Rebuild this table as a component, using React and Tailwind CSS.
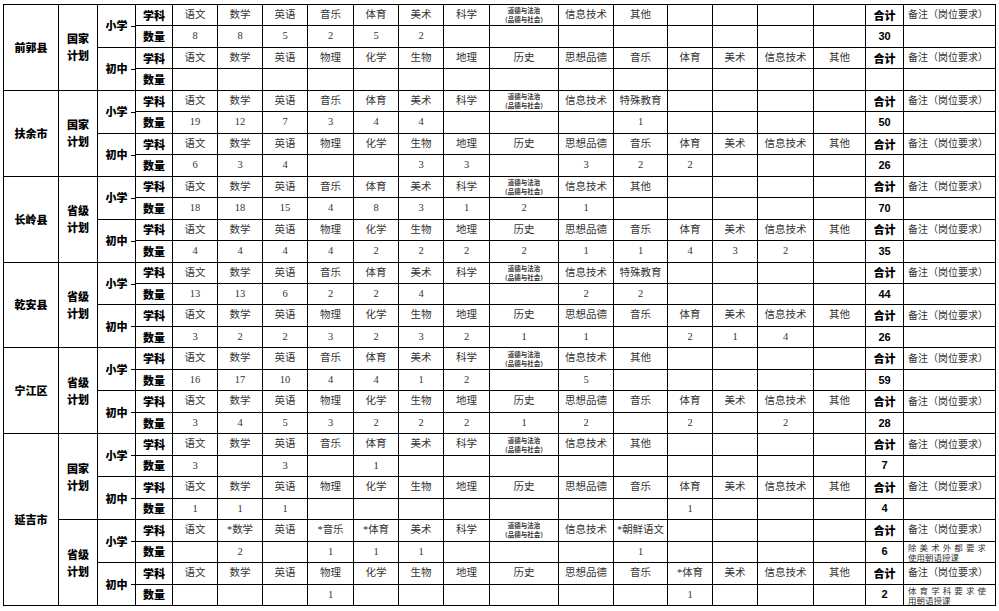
import React from "react";

const P = (x) => ["语文", "数学", "英语", "音乐", "体育", "美术", "科学", "DAO", "信息技术", x, "", "", "", ""];
const M = ["语文", "数学", "英语", "物理", "化学", "生物", "地理", "历史", "思想品德", "音乐", "体育", "美术", "信息技术", "其他"];
const E = ["", "", "", "", "", "", "", "", "", "", "", "", "", ""];
const n = (arr) => [...arr, ...E].slice(0, 14);

const blocks = [
  {
    county: "前郭县",
    plans: [
      {
        plan: ["国家", "计划"],
        levels: [
          { lvl: "小学", subj: P("其他"), nums: n([8, 8, 5, 2, 5, 2]), total: "30" },
          { lvl: "初中", subj: M, nums: n([]), total: "" },
        ],
      },
    ],
  },
  {
    county: "扶余市",
    plans: [
      {
        plan: ["国家", "计划"],
        levels: [
          { lvl: "小学", subj: P("特殊教育"), nums: n([19, 12, 7, 3, 4, 4, "", "", "", 1]), total: "50" },
          { lvl: "初中", subj: M, nums: n([6, 3, 4, "", "", 3, 3, "", 3, 2, 2]), total: "26" },
        ],
      },
    ],
  },
  {
    county: "长岭县",
    plans: [
      {
        plan: ["省级", "计划"],
        levels: [
          { lvl: "小学", subj: P("其他"), nums: n([18, 18, 15, 4, 8, 3, 1, 2, 1]), total: "70" },
          { lvl: "初中", subj: M, nums: n([4, 4, 4, 4, 2, 2, 2, 2, 1, 1, 4, 3, 2]), total: "35" },
        ],
      },
    ],
  },
  {
    county: "乾安县",
    plans: [
      {
        plan: ["省级", "计划"],
        levels: [
          { lvl: "小学", subj: P("特殊教育"), nums: n([13, 13, 6, 2, 2, 4, "", "", 2, 2]), total: "44" },
          { lvl: "初中", subj: M, nums: n([3, 2, 2, 3, 2, 3, 2, 1, 1, "", 2, 1, 4]), total: "26" },
        ],
      },
    ],
  },
  {
    county: "宁江区",
    plans: [
      {
        plan: ["省级", "计划"],
        levels: [
          { lvl: "小学", subj: P("其他"), nums: n([16, 17, 10, 4, 4, 1, 2, "", 5]), total: "59" },
          { lvl: "初中", subj: M, nums: n([3, 4, 5, 3, 2, 2, 2, 1, 2, "", 2, "", 2]), total: "28" },
        ],
      },
    ],
  },
  {
    county: "延吉市",
    plans: [
      {
        plan: ["国家", "计划"],
        levels: [
          { lvl: "小学", subj: P("其他"), nums: n([3, "", 3, "", 1]), total: "7" },
          { lvl: "初中", subj: M, nums: n([1, 1, 1, "", "", "", "", "", "", "", 1]), total: "4" },
        ],
      },
      {
        plan: ["省级", "计划"],
        levels: [
          {
            lvl: "小学",
            subj: ["语文", "*数学", "英语", "*音乐", "*体育", "美术", "科学", "DAO", "信息技术", "*朝鲜语文", "", "", "", ""],
            nums: n(["", 2, "", 1, 1, 1, "", "", "", 1]),
            total: "6",
            note: ["除美术外都要求", "使用朝语授课"],
          },
          {
            lvl: "初中",
            subj: ["语文", "数学", "英语", "物理", "化学", "生物", "地理", "历史", "思想品德", "音乐", "*体育", "美术", "信息技术", "其他"],
            nums: n(["", "", "", 1, "", "", "", "", "", "", 1]),
            total: "2",
            note: ["体育学科要求使", "用朝语授课"],
          },
        ],
      },
    ],
  },
];

const cell = "bg-white flex items-center justify-center overflow-hidden";
const label = "font-['Noto_Sans_CJK_SC',sans-serif] font-black text-[11px] text-black leading-none";
const data = "font-['Liberation_Serif','Noto_Sans_CJK_SC',serif] text-[10.5px] text-[#333] leading-none";
const totalCls = "font-['Liberation_Sans','Noto_Sans_CJK_SC',sans-serif] font-bold text-[11px] text-black leading-none";

function Subject({ s }) {
  if (s === "DAO") {
    return (
      <div className={`${cell} flex-col font-['Noto_Sans_CJK_SC',sans-serif] font-bold text-[6.5px] leading-[9px] text-[#333]`}>
        <span className="block h-[9px]">道德与法治</span>
        <span className="block h-[9px]">（品德与社会）</span>
      </div>
    );
  }
  return (
    <div className={`${cell} ${data} ${s.length >= 5 ? "text-[9.5px]" : ""}`}>{s}</div>
  );
}

function Level({ lv }) {
  const items = [];
  items.push(
    <div key="lvl" className={`${cell} ${label} row-span-2 relative`}>
      {lv.lvl}
      <span className="absolute right-0 top-1/2 h-px w-[4px] bg-black" />
    </div>
  );
  items.push(<div key="l1" className={`${cell} ${label}`}>学科</div>);
  lv.subj.forEach((s, i) => items.push(<Subject key={"s" + i} s={s} />));
  items.push(<div key="t1" className={`${cell} ${label}`}>合计</div>);
  items.push(
    <div key="r1" className={`bg-white flex items-center pl-[4px] ${data} text-[10px] whitespace-nowrap`}>
      备注（岗位要求）
    </div>
  );
  items.push(<div key="l2" className={`${cell} ${label}`}>数量</div>);
  lv.nums.forEach((v, i) =>
    items.push(
      <div key={"n" + i} className={`${cell} ${data}`}>
        {v}
      </div>
    )
  );
  items.push(<div key="t2" className={`${cell} ${totalCls}`}>{lv.total}</div>);
  items.push(
    <div key="r2" className="bg-white flex flex-col justify-center pl-[4px] overflow-hidden font-['Noto_Sans_CJK_SC',sans-serif] text-[8.5px] leading-[10px] text-[#333]">
      {lv.note ? (
        <>
          <div className="w-[78px] h-[10px] [text-align-last:justify]">{lv.note[0]}</div>
          <div className="h-[10px]">{lv.note[1]}</div>
        </>
      ) : null}
    </div>
  );
  return items;
}

export default function App() {
  const children = [];
  blocks.forEach((b, bi) => {
    const rows = b.plans.length * 4;
    children.push(
      <div key={"c" + bi} className={`${cell} ${label} ${rows === 8 ? "row-span-8" : "row-span-4"}`}>
        {b.county}
      </div>
    );
    b.plans.forEach((p, pi) => {
      children.push(
        <div key={"p" + bi + pi} className={`${cell} ${label} row-span-4 flex-col gap-[6px]`}>
          <span>{p.plan[0]}</span>
          <span>{p.plan[1]}</span>
        </div>
      );
      p.levels.forEach((lv, li) => {
        children.push(
          <React.Fragment key={"lv" + bi + pi + li}>
            <Level lv={lv} />
          </React.Fragment>
        );
      });
    });
  });

  return (
    <div className="w-[999px] h-[611px] bg-white overflow-hidden">
      <div className="ml-[3px] mt-[4px] w-fit h-[602px] bg-black p-px grid gap-px grid-cols-[54px_38px_37px_36px_44px_44px_44px_45px_44px_44px_45px_68px_54px_53px_44px_44px_55px_51px_37px_91px] grid-rows-[repeat(28,minmax(0,1fr))]">
        {children}
      </div>
    </div>
  );
}
